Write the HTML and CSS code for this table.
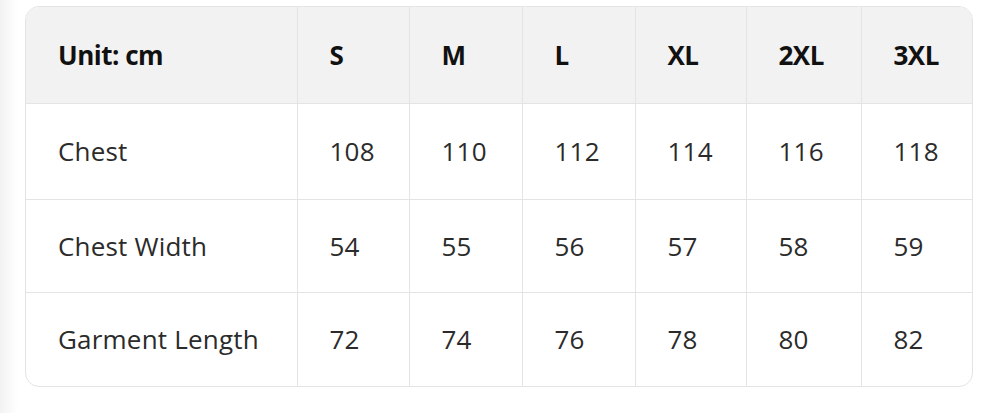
FILE: index.html
```html
<!DOCTYPE html>
<html lang="en">
<head>
<meta charset="utf-8">
<title>Size Chart</title>
<link rel="stylesheet" href="styles.css">
</head>
<body>
<div class="page">
  <div class="card">
    <table class="size-table">
      <colgroup>
        <col class="c-label"><col class="c-s"><col class="c-m"><col class="c-l"><col class="c-xl"><col class="c-2xl"><col class="c-3xl">
      </colgroup>
      <thead>
        <tr class="row-h">
          <th>Unit: cm</th><th>S</th><th>M</th><th>L</th><th>XL</th><th>2XL</th><th>3XL</th>
        </tr>
      </thead>
      <tbody>
        <tr class="row-1">
          <td>Chest</td><td>108</td><td>110</td><td>112</td><td>114</td><td>116</td><td>118</td>
        </tr>
        <tr class="row-2">
          <td>Chest Width</td><td>54</td><td>55</td><td>56</td><td>57</td><td>58</td><td>59</td>
        </tr>
        <tr class="row-3">
          <td>Garment Length</td><td>72</td><td>74</td><td>76</td><td>78</td><td>80</td><td>82</td>
        </tr>
      </tbody>
    </table>
  </div>
</div>
</body>
</html>
```
FILE: styles.css
```css
* { box-sizing: border-box; }
html, body { margin: 0; padding: 0; }
body {
  width: 1000px;
  height: 413px;
  overflow: hidden;
  background: linear-gradient(to right, #f2f2f2 0px, #f8f8f8 8px, #ffffff 18px);
  font-family: "Open Sans", "Noto Sans", sans-serif;
}
.page {
  padding: 6px 27px 0 25px;
}
.card {
  width: 948px;
  border: 1px solid #e4e4e4;
  border-radius: 14px;
  overflow: hidden;
  background: #ffffff;
}
.size-table {
  width: 100%;
  border-collapse: collapse;
  table-layout: fixed;
}
.c-label { width: 271px; }
.c-s { width: 112px; }
.c-m { width: 113px; }
.c-l { width: 113px; }
.c-xl { width: 111px; }
.c-2xl { width: 115px; }
.c-3xl { width: 113px; }
.size-table th,
.size-table td {
  text-align: left;
  vertical-align: middle;
  padding: 0 0 0 32px;
  border-right: 1px solid #e4e4e4;
  border-bottom: 1px solid #e4e4e4;
  white-space: nowrap;
}
.size-table th:last-child,
.size-table td:last-child { border-right: none; }
.size-table tr:last-child td { border-bottom: none; }
.size-table th {
  background: #f2f2f2;
  color: #111111;
  font-weight: 700;
  font-size: 26px;
  letter-spacing: -0.5px;
}
.size-table td {
  color: #2b2b2b;
  font-size: 26px;
  font-weight: 400;
  letter-spacing: 0.2px;
}
.row-h { height: 96px; }
.row-1 { height: 96px; }
.row-2 { height: 93px; }
.row-3 { height: 94px; }
```
